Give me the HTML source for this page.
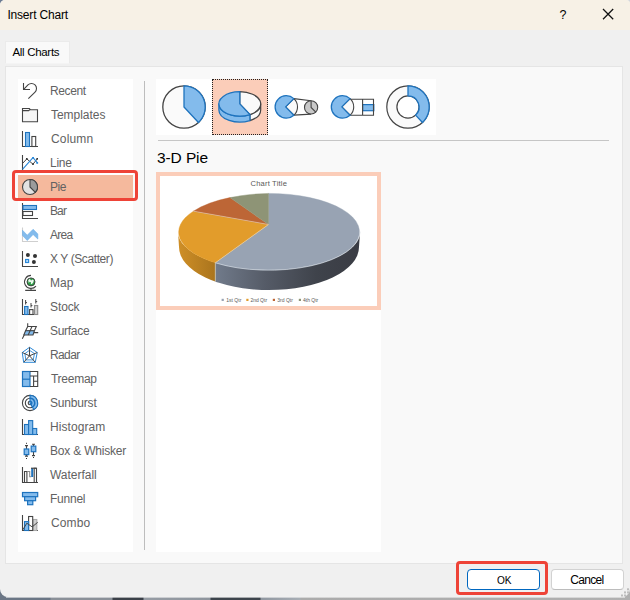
<!DOCTYPE html>
<html><head><meta charset="utf-8"><title>Insert Chart</title>
<style>
*{box-sizing:border-box;margin:0;padding:0}
html,body{width:630px;height:600px;overflow:hidden;background:#8a9098}
body{position:relative;font-family:"Liberation Sans",sans-serif;font-size:12px;color:#000}
.abs{position:absolute}
#backdrop{left:0;top:0;width:630px;height:600px;background:linear-gradient(90deg,#6b7685 0,#6b7685 50px,#8a9098 51px,#8a9098 112px,#3a4048 113px,#3a4048 143px,#969ca4 144px,#8f959d 210px,#3d444c 211px,#3d444c 260px,#9097a0 261px,#a8aeb5 300px,#ababab 301px,#b0b0b0 630px)}
#win{left:0;top:0;width:630px;height:597px;background:#f0f0f0;border-radius:5px 4px 8px 8px;overflow:hidden}
#titlebar{left:0;top:0;width:630px;height:30px;background:#f7f1e6}
.t{position:absolute;white-space:nowrap;line-height:14px;height:14px}
#tab{left:5px;top:41px;width:65px;height:23px;background:#f9f9f9;border:1px solid #ebebeb;border-bottom-color:#f4f4f4}
#panel{left:5px;top:66px;width:618px;height:498px;background:#f9f9f9;border:1px solid #e5e5e5}
.w{position:absolute;background:#fff}
.li{position:absolute;left:50px;color:#626262;white-space:nowrap;line-height:14px;height:14px;font-size:12px}
.btn{position:absolute;top:569px;height:21px;border-radius:4px;background:#fff}
.red{position:absolute;border:3px solid #ee4337;border-radius:4px}
</style></head><body>
<div id="backdrop" class="abs"></div>
<div class="abs" style="left:0;top:0;width:10px;height:10px;background:#6b7b92"></div><div class="abs" style="left:620px;top:0;width:10px;height:10px;background:#d3d6db"></div>
<div class="abs" style="left:6px;top:596px;width:619px;height:2px;background:rgba(242,242,242,.6)"></div>
<div id="win" class="abs">
<div id="titlebar" class="abs"></div>
<div class="t" style="left:7.4px;top:8px;letter-spacing:-.18px" id="ttl">Insert Chart</div>
<div class="t" style="left:559.6px;top:7.5px;font-size:12.5px" id="q">?</div>
<div id="panel" class="abs"></div>
<div id="tab" class="abs"></div>
<div class="t" style="left:12.4px;top:45.4px;letter-spacing:-.3px;font-size:11.5px" id="alltab">All Charts</div>
<div class="w" style="left:18px;top:79px;width:115px;height:473px"></div>
<div class="abs" style="left:18px;top:175px;width:115px;height:24px;background:#f5b99d"></div>
<div class="abs" style="left:144px;top:81px;width:1px;height:469px;background:#bdbdbd"></div>
<div class="w" style="left:156px;top:79px;width:280px;height:56px"></div>
<div class="abs" style="left:212px;top:79px;width:56px;height:56px;background:#fbcdb9;border:1px dotted #222"></div>
<div class="abs" style="left:158px;top:140px;width:451px;height:1px;background:#c6c6c6"></div>
<div class="t" style="left:157px;top:149px;font-size:15.5px;line-height:18px;height:18px;letter-spacing:-.1px" id="h3d">3-D Pie</div>
<div class="w" style="left:156px;top:172px;width:225px;height:380px"></div>
<div class="abs" style="left:156px;top:172px;width:225px;height:138px;border:4px solid #fbcdb9;background:#fff"></div>
<div class="li" style="left:50px;top:84px;letter-spacing:-0.4px">Recent</div>
<div class="li" style="left:51px;top:108px;letter-spacing:-0.03px">Templates</div>
<div class="li" style="left:51px;top:132px;letter-spacing:0.16px">Column</div>
<div class="li" style="left:50px;top:156px;letter-spacing:-0.27px">Line</div>
<div class="li" style="left:50px;top:180px;letter-spacing:-0.5px">Pie</div>
<div class="li" style="left:50px;top:204px;letter-spacing:-0.9px">Bar</div>
<div class="li" style="left:50px;top:228px;letter-spacing:-0.74px">Area</div>
<div class="li" style="left:50px;top:252px;letter-spacing:-0.4px">X Y (Scatter)</div>
<div class="li" style="left:50px;top:276px;letter-spacing:0.1px">Map</div>
<div class="li" style="left:50px;top:300px;letter-spacing:-0.1px">Stock</div>
<div class="li" style="left:50px;top:324px;letter-spacing:-0.3px">Surface</div>
<div class="li" style="left:50px;top:348px;letter-spacing:-0.61px">Radar</div>
<div class="li" style="left:51px;top:372px;letter-spacing:-0.26px">Treemap</div>
<div class="li" style="left:50px;top:396px;letter-spacing:-0.18px">Sunburst</div>
<div class="li" style="left:50px;top:420px;letter-spacing:0.07px">Histogram</div>
<div class="li" style="left:50px;top:444px;letter-spacing:-0.2px">Box &amp; Whisker</div>
<div class="li" style="left:50px;top:468px;letter-spacing:-0.02px">Waterfall</div>
<div class="li" style="left:50px;top:492px;letter-spacing:-0.24px">Funnel</div>
<div class="li" style="left:51px;top:516px;letter-spacing:0.11px">Combo</div>
<svg class="abs" style="left:0;top:0" width="630" height="600" viewBox="0 0 630 600" fill="none" stroke-linecap="butt">
<g stroke="#444" stroke-width="1.1">
<!-- Recent -->
<path d="M23.5 83v6.5h6.5M23.7 89.3l4.26-4.34a5 5 0 0 1 7.08 7.08l-6.7 6.6" />
<!-- Templates -->
<path d="M22.5 108.5h6.8l1 1.2h7.2v12h-15z" fill="#f6f6f6"/>
<path d="M22.5 110.6h6.2l1.4-1.2" />
<!-- Column -->
<path d="M22.5 131v15.5h15.5"/>
<rect x="31.9" y="136.5" width="3.8" height="10" fill="#fff"/>
<rect x="25.5" y="132.5" width="4" height="14" fill="#83bbec" stroke="#1e73be"/>
<!-- Line -->
<path d="M22.5 155v15"/>
<path d="M22.5 163.5l4.3-4.6l6.2 5.3l4.2-5.3" stroke-width="1"/>
<path d="M22.5 169.3l10.5-11.6l4.3 5" stroke="#2b88d8"/>
<g fill="#333" stroke="none"><rect x="26" y="158" width="1.6" height="1.6"/><rect x="32.2" y="163.4" width="1.6" height="1.6"/><rect x="36.4" y="158" width="1.6" height="1.6"/></g>
<g fill="#2b88d8" stroke="none"><rect x="32.2" y="157" width="1.8" height="1.8"/><rect x="36.3" y="162" width="1.8" height="1.8"/></g>
<!-- Bar -->
<path d="M22.5 203v15.5h15.5"/>
<rect x="23" y="211.5" width="9.5" height="4" fill="#fff"/>
<rect x="23" y="205.5" width="13.5" height="4" fill="#83bbec" stroke="#1e73be"/>
<!-- Area -->
<path d="M22.5 227.5v14h15.5" stroke="#cfcfcf"/>
<path d="M22.5 230.2l4.75 5l5.85-5.9l4.7 4.6v5.1l-4.7-4.5l-5.85 6l-4.75-5z" fill="#83bbec" stroke="#6aaee8" stroke-width=".6"/>
<!-- Scatter -->
<path d="M22.5 251v15.5h15.5"/>
<g fill="#333" stroke="none"><circle cx="27.9" cy="255" r="2"/><circle cx="35" cy="255.9" r="2"/><circle cx="33.9" cy="261.9" r="2"/></g>
<rect x="25.6" y="259.5" width="3" height="3" fill="#bfe0fa" stroke="#2b88d8" stroke-width="1.2"/>
<!-- Map -->
<circle cx="31" cy="281.9" r="4" fill="#2e9e48" stroke="#3a3a3a" stroke-width=".9"/>
<path d="M28.2 280.2l1.6-1.4l1.2 1.6l1.8-1l1 1.2l-.6 2l-1.4 1.6l-1-.4l.2-1.6l-1.4-.4l-.8 1.2z" fill="#eef8f0" stroke="none"/>
<path d="M31 275.4a6.5 6.5 0 1 0 5 10.7M31 288.4v1.8M25.2 290.4h10.8"/>
<!-- Stock -->
<path d="M22.5 299v15.5h15.5"/>
<rect x="24.6" y="306.5" width="3.4" height="8" fill="#83bbec" stroke="#1e73be"/>
<rect x="29.6" y="309.6" width="3.4" height="4.9" fill="#fff"/>
<rect x="34.5" y="305.5" width="3.2" height="9" fill="#d0d0d0" stroke="#8a8a8a"/>
<path d="M25.6 300v4.5M25.6 302.6h1.4M31 303v4.5M31 305.6h1.4M35.8 299v4.5M35.8 301.6h1.4" stroke-width="1"/>
<!-- Surface -->
<path d="M27.7 323.2v4.8M22.3 338.7l5.4-10.5"/>
<path d="M27.7 326.5h8.6l-1.9 4.2h-8.8z" fill="#fff"/>
<path d="M25.6 330.7h8.8l-1.4 4.3h-9.2z" fill="#83bbec"/>
<path d="M32 326.5l-3.8 8.5M33.8 332.6h4.4"/>
<!-- Radar -->
<path d="M29.5 347.3l7.75 5.2l-2 9.8h-11.6l-1.4-9.8z" stroke="#2b88d8" stroke-width="1"/>
<path d="M29.5 350.3l5 3.3l-1.3 6.3h-7.4l-.9-6.3z" stroke="#2b88d8" stroke-width=".9"/>
<path d="M29.5 355.8v-8.5M29.5 355.8l7.75-3.3M29.5 355.8l5.8 6.5M29.5 355.8l-5.8 6.5M29.5 355.8l-7.25-3.3" stroke-width="1"/>
<!-- Treemap -->
<rect x="22.5" y="371.5" width="7.5" height="15" fill="#83bbec" stroke="#1e73be" stroke-width="1.2"/>
<path d="M22.5 379.2h7.5" stroke="#1e73be" stroke-width="1.2"/>
<path d="M30 371.5h7.7v15h-7.7M30 376h7.7M33.6 376v10.5M33.6 381.3h4.1" />
<!-- Sunburst -->
<circle cx="30" cy="403" r="7.6" fill="#fff"/><circle cx="30" cy="403" r="4.7"/><circle cx="30" cy="403" r="1.8"/>
<path d="M30 403v-7.6a7.6 7.6 0 0 1 3.8 14.2z" fill="#83bbec" stroke="#1e73be"/>
<path d="M30 398.3a4.7 4.7 0 0 1 2.35 8.77M30 401.2a1.8 1.8 0 0 1 .9 3.36" stroke="#1e73be" stroke-width="1.5"/>
<!-- Histogram -->
<path d="M22.5 419v15.5h15.5"/>
<g fill="#83bbec" stroke="#1e73be"><rect x="24.5" y="424.5" width="4.1" height="10"/><rect x="28.6" y="420.6" width="4.1" height="13.9"/><rect x="32.7" y="428.5" width="4" height="6"/></g>
<!-- Box & whisker -->
<path d="M26.5 445.6v3.4M26.5 454.7v1.4M25 445.6h3M25 456.1h3M33.5 444.3v1.8M33.5 451.7v3.9M32 444.3h3M32 455.6h3"/>
<g fill="#83bbec" stroke="#1e73be" stroke-width="1.2"><rect x="24.2" y="449" width="4.6" height="5.6"/><rect x="31.2" y="446.1" width="4.6" height="5.6"/></g>
<g fill="#333" stroke="none"><rect x="26" y="442.8" width="1" height="1"/><rect x="26" y="458" width="1" height="1"/><rect x="33" y="457" width="1" height="1"/></g>
<!-- Waterfall -->
<path d="M22.5 467v15.5h15.5"/>
<path d="M24.5 482.5v-11h2.4v11"/>
<path d="M26.9 471.5h2.8v5.2h1.5" stroke="#8a8a8a"/>
<rect x="31.2" y="468" width="2" height="9" fill="#1e73be" stroke="none"/>
<path d="M34.2 482.5v-14.3h2.3v14.3"/>
<path d="M31 468.2h5.5" />
<!-- Funnel -->
<g fill="#83bbec" stroke="#1e73be" stroke-width="1.2"><rect x="22.5" y="492.5" width="15.2" height="4.2"/><rect x="24.6" y="496.7" width="11" height="4"/><rect x="27.6" y="500.7" width="5.2" height="4"/></g>
<!-- Combo -->
<path d="M22.5 515v15.5h15.5"/>
<rect x="33" y="519.5" width="3.8" height="11" fill="#d0d0d0" stroke="#aaa"/>
<rect x="28.6" y="516.5" width="4.1" height="14" fill="#fff"/>
<rect x="24.5" y="521.6" width="4.1" height="8.9" fill="#83bbec" stroke="#1e73be"/>
<path d="M22.7 530l4.1-6.8l5.4 3.7l5.5-4.6" stroke-width="1"/>
</g>
<!-- Pie (list) -->
<circle cx="30" cy="187" r="7.5" fill="#e2e2e2" stroke="#444" stroke-width="1.1"/>
<path d="M30 187v-7.5a7.5 7.5 0 0 1 5.3 12.8z" fill="#9b9b9b" stroke="#444" stroke-width="1.1" stroke-linejoin="round"/>
<path d="M603 9l10.2 10.2M613.2 9l-10.2 10.2" stroke="#111" stroke-width="1.25"/>
<g fill="#bdbdbd" stroke="none"><rect x="627" y="588.3" width="2" height="2"/><rect x="624" y="591.4" width="2" height="2"/><rect x="627" y="591.4" width="2" height="2"/><rect x="621" y="594.5" width="2" height="2"/><rect x="624" y="594.5" width="2" height="2"/><rect x="627" y="594.5" width="2" height="2"/></g>
<circle cx="184" cy="107" r="21.2" fill="#fafafa" stroke="#444" stroke-width="1.3"/>
<path d="M184 107V85.8A21.2 21.2 0 0 1 198.46 122.5Z" fill="#83bbec" stroke="#1e73be" stroke-width="1.3" stroke-linejoin="round"/>
<path d="M249.93 114.57V120.57A20.9 12.2 0 0 0 260.7 109.9V103.9A20.9 12.2 0 0 1 249.93 114.57Z" fill="#fafafa" stroke="#444" stroke-width="1.2" stroke-linejoin="round"/>
<path d="M218.9 103.9V109.9A20.9 12.2 0 0 0 249.93 120.57V114.57A20.9 12.2 0 0 1 218.9 103.9Z" fill="#83bbec" stroke="#1e73be" stroke-width="1.3" stroke-linejoin="round"/>
<path d="M239.8 103.9V91.7A20.9 12.2 0 0 1 249.93 114.57Z" fill="#fafafa" stroke="#444" stroke-width="1.2" stroke-linejoin="round"/>
<path d="M239.8 103.9L249.93 114.57A20.9 12.2 0 1 1 239.8 91.7Z" fill="#83bbec" stroke="#1e73be" stroke-width="1.3" stroke-linejoin="round"/>
<path d="M293.87 98.63L311.1 100.7M293.87 115.17L311.1 114.1" stroke="#444" stroke-width="1.1"/>
<path d="M285.6 106.9L293.87 98.63A11.2 11.2 0 0 1 293.87 115.17Z" fill="#fafafa" stroke="#444" stroke-width="1.1" stroke-linejoin="round"/><path d="M285.6 106.9L293.87 115.17A11.2 11.2 0 1 1 293.87 98.63Z" fill="#83bbec" stroke="#1e73be" stroke-width="1.3" stroke-linejoin="round"/>
<circle cx="311.1" cy="107.4" r="6.6" fill="#c8c8c8" stroke="#444" stroke-width="1.1"/>
<path d="M311.1 100.8V107.4L315.8 112.1" stroke="#444" stroke-width="1.1" fill="none"/>
<rect x="362.6" y="104.6" width="11.2" height="6.1" fill="#83bbec" stroke="#1e73be" stroke-width="1.2"/>
<path d="M350.07 99.2H373.5V115.2H350.07M362.6 99.2V115.2" stroke="#444" stroke-width="1.1" fill="none"/>
<path d="M341.8 106.9L350.07 98.63A11.2 11.2 0 0 1 350.07 115.17Z" fill="#fafafa" stroke="#444" stroke-width="1.1" stroke-linejoin="round"/><path d="M341.8 106.9L350.07 115.17A11.2 11.2 0 1 1 350.07 98.63Z" fill="#83bbec" stroke="#1e73be" stroke-width="1.3" stroke-linejoin="round"/>
<circle cx="408" cy="107" r="21.2" fill="#fafafa" stroke="#444" stroke-width="1.2"/>
<circle cx="408" cy="107" r="11.1" fill="#fff" stroke="#444" stroke-width="1.2"/>
<path d="M408 95.9V85.8A21.2 21.2 0 0 1 422.46 122.5L415.57 115.12A11.1 11.1 0 0 0 408 95.9Z" fill="#83bbec" stroke="#1e73be" stroke-width="1.3" stroke-linejoin="round"/>
<defs><linearGradient id="gw" x1="215" x2="360" y1="0" y2="0" gradientUnits="userSpaceOnUse"><stop offset="0" stop-color="#717b8b"/><stop offset=".35" stop-color="#555b67"/><stop offset=".7" stop-color="#3f434b"/><stop offset="1" stop-color="#3a3c44"/></linearGradient>
<linearGradient id="ow" x1="178" x2="216" y1="0" y2="0" gradientUnits="userSpaceOnUse"><stop offset="0" stop-color="#cf8f27"/><stop offset="1" stop-color="#a9741d"/></linearGradient>
<clipPath id="cl"><rect x="160" y="176" width="55.3" height="130"/></clipPath><clipPath id="cr"><rect x="215.3" y="176" width="162" height="130"/></clipPath></defs>
<path d="M178 231.7L179 247A90 43 0 0 0 359 247L360 231.7A91 38.3 0 0 1 178 231.7Z" fill="url(#ow)" clip-path="url(#cl)"/>
<path d="M178 231.7L179 247A90 43 0 0 0 359 247L360 231.7A91 38.3 0 0 1 178 231.7Z" fill="url(#gw)" clip-path="url(#cr)"/>
<path d="M215.3 262.8V281.4" stroke="#d9c9a8" stroke-width=".7"/>
<path d="M268.5 224.5L268.5 193.4A91 38.3 0 1 1 215.3 262.8Z" fill="#98a3b3" stroke="#98a3b3" stroke-width=".4"/>
<path d="M268.5 224.5L215.3 262.8A91 38.3 0 0 1 193.4 211.2Z" fill="#e29c2b" stroke="#e29c2b" stroke-width=".4"/>
<path d="M268.5 224.5L193.4 211.2A91 38.3 0 0 1 229.9 197.6Z" fill="#bd6636" stroke="#bd6636" stroke-width=".4"/>
<path d="M268.5 224.5L229.9 197.6A91 38.3 0 0 1 268.5 193.4Z" fill="#8e9476" stroke="#8e9476" stroke-width=".4"/>
<path d="M360 231.7A91 38.3 0 0 1 215.3 262.8" fill="none" stroke="#cfd5de" stroke-width=".7"/>
<path d="M268.5 224.5L215.3 262.8M268.5 224.5L193.4 211.2" stroke="#efe6d6" stroke-width=".5" fill="none"/>
<g font-family="Liberation Sans, sans-serif" fill="#595959" stroke="none">
<text x="250.5" y="186" font-size="7.6" textLength="36.4" lengthAdjust="spacing">Chart Title</text>
<rect x="221.6" y="298.8" width="2.2" height="2.2" fill="#98a3b3"/><text x="226.3" y="301.8" font-size="5">1st Qtr</text>
<rect x="246.3" y="298.8" width="2.2" height="2.2" fill="#e29c2b"/><text x="250.4" y="301.8" font-size="5">2nd Qtr</text>
<rect x="272.8" y="298.8" width="2.2" height="2.2" fill="#bd6636"/><text x="277.3" y="301.8" font-size="5">3rd Qtr</text>
<rect x="298.8" y="298.8" width="2.2" height="2.2" fill="#8e9476"/><text x="303" y="301.8" font-size="5">4th Qtr</text>
</g>
</svg>

<div class="btn" style="left:467px;width:73px;border:1px solid #0067c0"></div>
<div class="btn" style="left:551px;width:73px;border:1px solid #d2d2d2;border-bottom-color:#bcbcbc"></div>
<div class="t" style="left:496.5px;top:573.3px;font-size:11.5px;transform:scaleX(.88);transform-origin:0 0" id="ok">OK</div>
<div class="t" style="left:570.3px;top:573px;letter-spacing:-.68px" id="cancel">Cancel</div>
<div class="red" style="left:12px;top:170px;width:126px;height:31px"></div>
<div class="red" style="left:456px;top:561px;width:92px;height:34px"></div>
</div>
</body></html>
